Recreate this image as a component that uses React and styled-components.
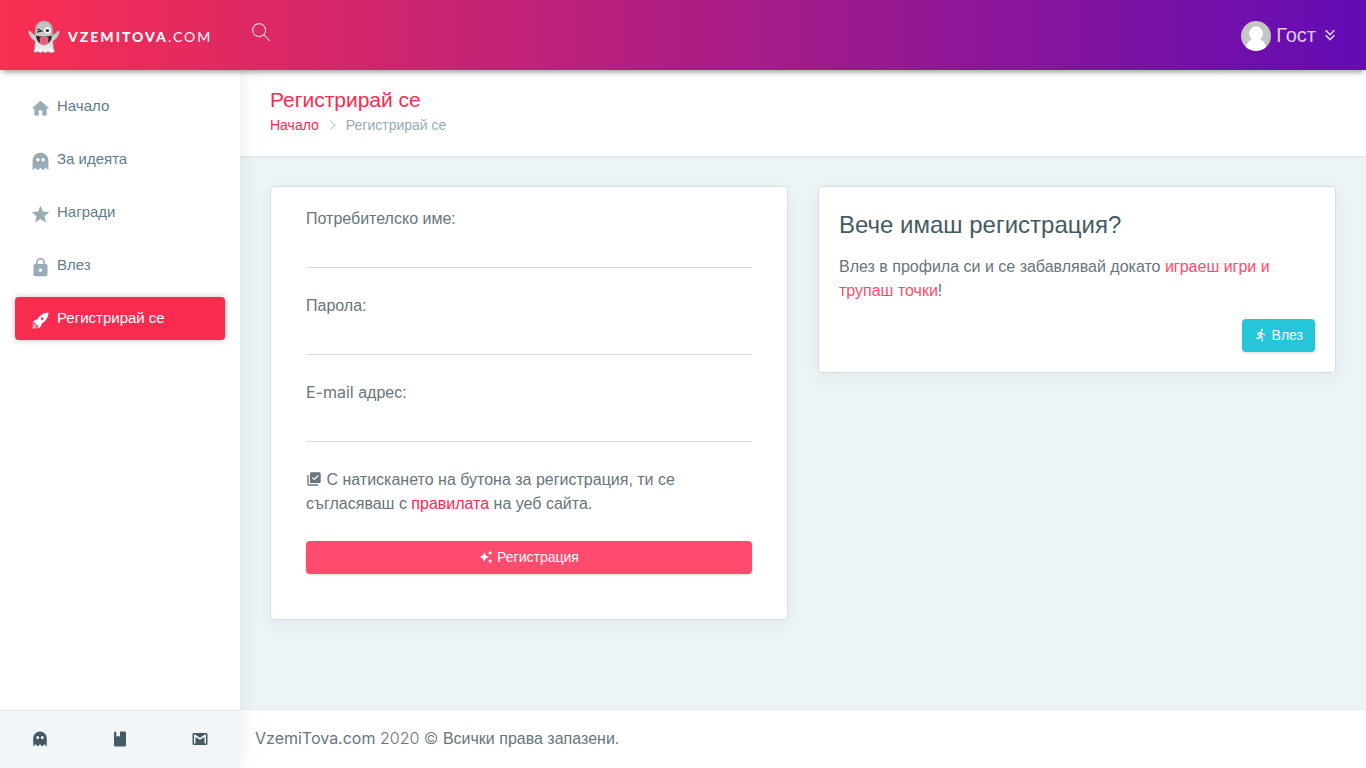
import React from 'react';
import styled, { createGlobalStyle } from 'styled-components';
import {
    MdHome,
    MdStar,
    MdLock,
    MdDirectionsRun,
    MdLibraryAddCheck,
    MdAutoAwesome,
} from 'react-icons/md';

const GlobalStyle = createGlobalStyle`
    * {
        box-sizing: border-box;
    }
    body {
        margin: 0;
        background-color: #ecf4f8;
        color: #67757c;
        font-family: "Liberation Sans", sans-serif;
        font-size: 16px;
        line-height: 24px;
    }
    a {
        text-decoration: none;
    }
    p, h1, h3, ul, ol {
        margin: 0;
        padding: 0;
    }
    ul, ol {
        list-style: none;
    }
`

const Page = styled.div`
    min-height: 100vh;
    display: flex;
    flex-direction: column;
`
const TopBar = styled.header`
    height: 70px;
    display: flex;
    align-items: center;
    background-image: linear-gradient(to right, #fa2f51, #620cb4);
    box-shadow: 0 5px 5px -3px rgba(0, 0, 0, .3), 0 3px 8px -1px rgba(0, 0, 0, .12);
    z-index: 20;
`
const Brand = styled.a`
    width: 240px;
    padding: 4px 0 0 28px;
    display: flex;
    align-items: center;
    gap: 8px;
    color: white;
`
const BrandName = styled.span`
    font-family: Lato, sans-serif;
    font-size: 14px;
    letter-spacing: 2px;
    font-weight: 400;

    b {
        font-weight: 900;
    }
`
const SearchButton = styled.button`
    padding: 0;
    margin: 0 auto 6px 12px;
    border: 0;
    background: none;
    color: rgba(255, 255, 255, .8);
    display: flex;
    cursor: pointer;
`
const UserMenu = styled.button`
    padding: 2px 26px 0 0;
    border: 0;
    background: none;
    color: rgba(255, 255, 255, .8);
    font-family: inherit;
    font-size: 20px;
    line-height: 28px;
    display: flex;
    align-items: center;
    gap: 5px;
    cursor: pointer;
`
const UserName = styled.span`
    padding-bottom: 2px;
    display: flex;
    align-items: center;
    gap: 4px;
`
const Main = styled.div`
    flex: 1;
    display: flex;
`
const Sidebar = styled.aside`
    width: 240px;
    flex-shrink: 0;
    background-color: white;
    display: flex;
    flex-direction: column;
    justify-content: space-between;
    box-shadow: 1px 0 20px rgba(0, 0, 0, .08);
    z-index: 10;
`
const Menu = styled.ul`
    padding: 15px;
    display: flex;
    flex-direction: column;
    gap: 10px;
`
const MenuLink = styled.a`
    height: 43px;
    padding: 0 15px 2px;
    display: flex;
    align-items: center;
    gap: 6px;
    border-radius: 4px;
    font-size: 15px;
    color: ${props => props.$active ? 'white' : '#607d8b'};
    background-color: ${props => props.$active ? '#f92c50' : 'transparent'};
    box-shadow: ${props => props.$active ? '0 0 6px rgba(0, 0, 0, .25)' : 'none'};

    svg {
        margin-top: 6px;
        color: ${props => props.$active ? 'white' : '#99abb4'};
    }
`
const SidebarFooter = styled.div`
    height: 58px;
    padding-bottom: 2px;
    border-top: 1px solid #e3e6e9;
    background-color: #f2f6f8;
    display: flex;
`
const FooterLink = styled.a`
    flex: 1;
    display: flex;
    align-items: center;
    justify-content: center;
    color: #455a64;
`
const Content = styled.div`
    flex: 1;
    display: flex;
    flex-direction: column;
`
const TitleBar = styled.div`
    height: 86px;
    padding: 18px 30px 0;
    background-color: white;
    box-shadow: 0 1px 2px rgba(0, 0, 0, .08);
`
const Title = styled.h1`
    color: #f92c50;
    font-size: 21px;
    font-weight: 400;
    line-height: 24px;
`
const Breadcrumb = styled.ol`
    display: flex;
    align-items: center;
    gap: 10px;
    font-size: 14px;
    line-height: 26px;
    color: #99abb4;

    a {
        color: #f92c50;
    }
    li {
        display: flex;
        align-items: center;
        gap: 10px;
    }
`
const Cards = styled.main`
    flex: 1;
    padding: 30px;
    display: grid;
    grid-template-columns: 1fr 1fr;
    gap: 30px;
    align-items: start;
`
const Card = styled.section`
    padding: 20px;
    background-color: white;
    border: 1px solid #d7dfe3;
    border-radius: 4px;
    box-shadow: 0 5px 20px rgba(0, 0, 0, .05);
`
const Form = styled.form`
    padding: 0 15px 25px;
`
const Field = styled.div`
    margin-bottom: 26px;
    display: flex;
    flex-direction: column;

    input {
        height: 37px;
        padding: 0;
        border: 0;
        border-bottom: 1px solid #d9d9d9;
        outline: 0;
        background: none;
        color: #67757c;
        font: inherit;
    }
`
const Terms = styled.p`
    margin-bottom: 25px;

    a {
        color: #f92c50;
    }
    svg {
        vertical-align: -2px;
    }
`
const Button = styled.button`
    width: ${props => props.$block ? '100%' : 'auto'};
    height: 33px;
    padding: 0 12px 2px;
    border: 0;
    border-radius: 4px;
    background-color: ${props => props.$block ? '#ff4c6e' : '#26c6da'};
    box-shadow: 0 1px 3px rgba(0, 0, 0, .15);
    color: white;
    font-family: inherit;
    font-size: 14px;
    line-height: 20px;
    display: flex;
    align-items: center;
    justify-content: center;
    gap: 4px;
    cursor: pointer;
`
const CardTitle = styled.h3`
    margin-bottom: 12px;
    color: #455a64;
    font-size: 24px;
    font-weight: 400;
    line-height: 36px;
`
const CardText = styled.p`
    margin-bottom: 16px;
`
const Accent = styled.span`
    color: #ff4c6e;
`
const Actions = styled.div`
    display: flex;
    justify-content: flex-end;
`
const Footer = styled.footer`
    height: 59px;
    padding: 17px 15px;
    border-top: 1px solid #e6ecef;
    background-color: white;
`
const Latin = styled.span`
    font-family: Inter, sans-serif;
    font-weight: ${props => props.$light ? 300 : 400};
    line-height: 16px;
`

const Glyph = ({ size, d }) => (
    <svg width={size} height={size} viewBox="0 0 24 24" fill="currentColor" aria-hidden="true">
        <path d={d} />
    </svg>
)

const ghost = 'M12 2A9 9 0 0 0 3 11V22L6 19L9 22L12 19L15 22L18 19L21 22V11A9 9 0 0 0 12 2M9 8A2 2 0 0 1 11 10A2 2 0 0 1 9 12A2 2 0 0 1 7 10A2 2 0 0 1 9 8M15 8A2 2 0 0 1 17 10A2 2 0 0 1 15 12A2 2 0 0 1 13 10A2 2 0 0 1 15 8Z'
const rocket = 'M2.81 14.12L5.64 11.3L8.17 10.79C11.2 6.3 15.2 3.2 21.22 2.78C20.8 8.8 17.7 12.8 13.21 15.83L12.7 18.36L9.88 21.19L9.17 17.66C7.76 17.66 7.76 17.66 7.05 16.95C6.34 16.25 6.34 16.25 6.34 14.84L2.81 14.12M5.64 16.95L7.05 18.36L4.39 21.03H2.97V19.61L5.64 16.95M4.22 15.54L5.46 15.71L3 18.16V16.74L4.22 15.54M8.29 18.54L8.46 19.78L7.26 21H5.84L8.29 18.54M14 8.4A1.5 1.5 0 0 0 12.5 9.9A1.5 1.5 0 0 0 14 11.4A1.5 1.5 0 0 0 15.5 9.9A1.5 1.5 0 0 0 14 8.4Z'
const book = 'M18 22A2 2 0 0 0 20 20V4C20 2.89 19.1 2 18 2H12V9L9.5 7.5L7 9V2H6A2 2 0 0 0 4 4V20A2 2 0 0 0 6 22H18Z'
const mail = 'M20 18H18V9.25L12 13L6 9.25V18H4V6H5.2L12 10.25L18.8 6H20M20 4H4C2.89 4 2 4.89 2 6V18A2 2 0 0 0 4 20H20A2 2 0 0 0 22 18V6C22 4.89 21.1 4 20 4Z'
const chevrons = 'M16.59 5.59L18 7L12 13L6 7L7.41 5.59L12 10.17L16.59 5.59M16.59 11.59L18 13L12 19L6 13L7.41 11.59L12 16.17L16.59 11.59Z'

const GhostLogo = () => (
    <svg width="32" height="34" viewBox="0 0 32 34" aria-hidden="true">
        <defs>
            <linearGradient id="sheet" x1="0" y1="0" x2="0" y2="1">
                <stop offset="0" stopColor="#bdbdbd" />
                <stop offset=".55" stopColor="#cfcfcf" />
                <stop offset="1" stopColor="#fafafa" />
            </linearGradient>
        </defs>
        <path
            d="M16 1C10.5 1 7.3 5 7.3 10.5V15C5.5 14.5 3.5 12.5 1.8 10.6C.6 10.6.2 12 .8 13.4C2 17 4.2 19.5 7 20.8C7 25.5 6.6 29 5.6 31.6C7 33 8.6 32.6 10 31.4C11.6 33.2 13.4 33.2 15 31.6C16.8 33.2 18.6 33.2 20 31.4C21.8 32.8 24.4 33.2 26.6 31.8C25.4 28 25 25 25 20.8C27.8 19.5 30 17 31.2 13.4C31.8 12 31.4 10.6 30.2 10.6C28.5 12.5 26.5 14.5 24.7 15V10.5C24.7 5 21.5 1 16 1Z"
            fill="url(#sheet)"
            stroke="#9b8f92"
            strokeWidth=".7"
        />
        <circle cx="19.4" cy="10.6" r="4" fill="white" stroke="#8d8d8d" strokeWidth=".6" />
        <circle cx="19.4" cy="10.6" r="1.7" fill="#263238" />
        <path d="M9.3 8.8L13.5 11L9 12.2" fill="none" stroke="#333" strokeWidth="1.3" />
        <path d="M8 15.6C13 17 19 17 24 15.6C23.8 21 20.5 24.4 16 24.4C11.5 24.4 8.3 21 8 15.6Z" fill="#34292c" />
        <path d="M11.8 17.6C14.5 16.5 17.5 16.5 20.3 17.6V21.5C20.3 26.5 11.8 26.5 11.8 21.5Z" fill="#e8667f" />
        <path d="M16 18V22.5" stroke="#c53a5b" strokeWidth=".9" />
    </svg>
)

const Avatar = () => (
    <svg width="30" height="30" viewBox="0 0 30 30" aria-hidden="true">
        <clipPath id="round"><circle cx="15" cy="15" r="15" /></clipPath>
        <g clipPath="url(#round)">
            <rect width="30" height="30" fill="#c5c5c5" />
            <circle cx="15" cy="12.6" r="7" fill="white" />
            <path d="M4.5 30C4.5 22.5 8.5 18.6 12 18.3H18C21.5 18.6 25.5 22.5 25.5 30Z" fill="white" />
        </g>
    </svg>
)

const menu = [
    { text: 'Начало', icon: <MdHome size={21} /> },
    { text: 'За идеята', icon: <Glyph size={21} d={ghost} /> },
    { text: 'Награди', icon: <MdStar size={21} /> },
    { text: 'Влез', icon: <MdLock size={21} /> },
    { text: 'Регистрирай се', icon: <Glyph size={21} d={rocket} />, active: true },
]

export default function App() {
    return (
        <Page>
            <GlobalStyle />
            <TopBar>
                <Brand href="#">
                    <GhostLogo />
                    <BrandName><b>VZEMITOVA</b>.COM</BrandName>
                </Brand>
                <SearchButton type="button" aria-label="Търсене">
                    <svg width="19" height="19" viewBox="0 0 20 20" fill="none" stroke="currentColor" strokeWidth="1.2">
                        <circle cx="7.5" cy="7.5" r="6.8" />
                        <path d="M12.3 12.3L19 19" />
                    </svg>
                </SearchButton>
                <UserMenu type="button">
                    <Avatar />
                    <UserName>
                        Гост
                        <Glyph size={20} d={chevrons} />
                    </UserName>
                </UserMenu>
            </TopBar>
            <Main>
                <Sidebar>
                    <Menu>
                        {menu.map(item => (
                            <li key={item.text}>
                                <MenuLink href="#" $active={item.active}>
                                    {item.icon}
                                    {item.text}
                                </MenuLink>
                            </li>
                        ))}
                    </Menu>
                    <SidebarFooter>
                        <FooterLink href="#" aria-label="За идеята"><Glyph size={18} d={ghost} /></FooterLink>
                        <FooterLink href="#" aria-label="Правила"><Glyph size={18} d={book} /></FooterLink>
                        <FooterLink href="#" aria-label="Контакт"><Glyph size={18} d={mail} /></FooterLink>
                    </SidebarFooter>
                </Sidebar>
                <Content>
                    <TitleBar>
                        <Title>Регистрирай се</Title>
                        <Breadcrumb>
                            <li><a href="#">Начало</a></li>
                            <li>
                                <svg width="7" height="10" viewBox="0 0 7 10" fill="none" stroke="#b5c1c8">
                                    <path d="M1 .5L6 5L1 9.5" />
                                </svg>
                                Регистрирай се
                            </li>
                        </Breadcrumb>
                    </TitleBar>
                    <Cards>
                        <Card>
                            <Form>
                                <Field>
                                    <label htmlFor="username">Потребителско име:</label>
                                    <input id="username" type="text" />
                                </Field>
                                <Field>
                                    <label htmlFor="password">Парола:</label>
                                    <input id="password" type="password" />
                                </Field>
                                <Field>
                                    <label htmlFor="email"><Latin>E-mail</Latin> адрес:</label>
                                    <input id="email" type="email" />
                                </Field>
                                <Terms>
                                    <MdLibraryAddCheck size={16} /> С натискането на бутона за регистрация, ти се
                                    съгласяваш с <a href="#">правилата</a> на уеб сайта.
                                </Terms>
                                <Button type="button" $block>
                                    <MdAutoAwesome size={14} />
                                    Регистрация
                                </Button>
                            </Form>
                        </Card>
                        <Card>
                            <CardTitle>Вече имаш регистрация?</CardTitle>
                            <CardText>
                                Влез в профила си и се забавлявай докато <Accent>играеш игри и трупаш точки</Accent>!
                            </CardText>
                            <Actions>
                                <Button type="button">
                                    <MdDirectionsRun size={14} />
                                    Влез
                                </Button>
                            </Actions>
                        </Card>
                    </Cards>
                    <Footer>
                        <Latin>VzemiTova.com</Latin> <Latin $light>2020 ©</Latin> Всички права запазени.
                    </Footer>
                </Content>
            </Main>
        </Page>
    )
}
